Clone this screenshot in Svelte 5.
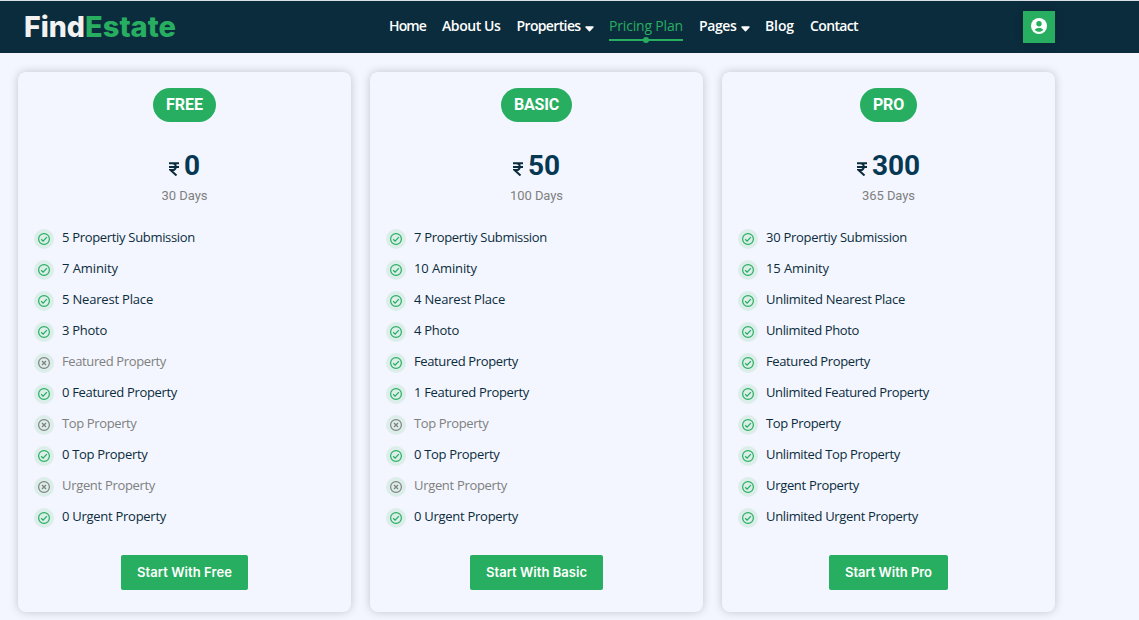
<script>
  const nav = [
    { label: 'Home', w: 37 },
    { label: 'About Us', w: 58.5 },
    { label: 'Properties', w: 76.5, tw: 64, menu: true },
    { label: 'Pricing Plan', w: 74, active: true },
    { label: 'Pages', w: 50, tw: 37.5, menu: true },
    { label: 'Blog', w: 29 },
    { label: 'Contact', w: 48 }
  ];

  const plans = [
    {
      name: 'Free', pill: 63, price: '0', days: 30, daysW: 46, button: 127,
      features: [
        ['5 Propertiy Submission', 133], ['7 Aminity', 56], ['5 Nearest Place', 91], ['3 Photo', 45],
        ['Featured Property', 104, true], ['0 Featured Property', 115], ['Top Property', 74.5, true],
        ['0 Top Property', 85.5], ['Urgent Property', 93, true], ['0 Urgent Property', 104]
      ]
    },
    {
      name: 'Basic', pill: 71, price: '50', days: 100, daysW: 53, button: 133,
      features: [
        ['7 Propertiy Submission', 133], ['10 Aminity', 63], ['4 Nearest Place', 91], ['4 Photo', 45],
        ['Featured Property', 104], ['1 Featured Property', 115], ['Top Property', 74.5, true],
        ['0 Top Property', 85.5], ['Urgent Property', 93, true], ['0 Urgent Property', 104]
      ]
    },
    {
      name: 'Pro', pill: 57, price: '300', days: 365, daysW: 53, button: 119,
      features: [
        ['30 Propertiy Submission', 141], ['15 Aminity', 63], ['Unlimited Nearest Place', 139], ['Unlimited Photo', 93],
        ['Featured Property', 104], ['Unlimited Featured Property', 163], ['Top Property', 74.5],
        ['Unlimited Top Property', 134], ['Urgent Property', 93], ['Unlimited Urgent Property', 152]
      ]
    }
  ];

  function track(node, width) {
    const natural = node.getBoundingClientRect().width;
    node.style.letterSpacing = `${(width - natural) / node.textContent.length}px`;
  }
</script>

<header>
  <svg class="logo" width="152" height="32" viewBox="0 0 152 32" role="img" aria-label="FindEstate">
    <text class="find" x="-1" y="24.6" textLength="61" lengthAdjust="spacingAndGlyphs">Find</text>
    <text class="estate" x="60" y="24.6" textLength="91" lengthAdjust="spacingAndGlyphs">Estate</text>
  </svg>
  <nav>
    {#each nav as item}
      <a href="#top" class:active={item.active} style:width="{item.w}px">
        <span use:track={item.tw ?? item.w}>{item.label}</span>
        {#if item.menu}
          <svg class="caret" width="9" height="6" viewBox="0 0 9 6"><path d="M1 1h7L4.5 4.8z" fill="#fff" stroke="#fff" stroke-width="1.4" stroke-linejoin="round" /></svg>
        {/if}
      </a>
    {/each}
  </nav>
  <button class="account" aria-label="Account">
    <svg width="16" height="16" viewBox="0 0 16 16">
      <circle cx="8" cy="8" r="8" fill="#fff" />
      <circle cx="8" cy="5.7" r="2.7" fill="#27ae60" />
      <path d="M3.8 11.8c.8-1.4 2.3-1.9 4.2-1.9s3.4.5 4.2 1.9C11 13.2 9.7 13.8 8 13.8s-3-.6-4.2-2z" fill="#27ae60" />
    </svg>
  </button>
</header>

<main>
  {#each plans as plan}
    <article>
      <h2 style:width="{plan.pill}px"><span use:track={plan.pill - 26}>{plan.name.toUpperCase()}</span></h2>
      <div class="price">
        <svg class="rupee" width="10" height="14" viewBox="0 0 10 14"><path d="M0 1.2h10M0 5h10M0 1.2h3c5 0 5 6.9 0 6.9H1.5L7.5 13.5" fill="none" stroke="#0b2c3d" stroke-width="2" /></svg>
        <strong>{plan.price}</strong>
      </div>
      <p><span use:track={plan.daysW}>{plan.days} Days</span></p>
      <ul>
        {#each plan.features as [label, width, off]}
          <li class:off>
            <i>
              <svg width="12" height="12" viewBox="0 0 12 12" fill="none" stroke="currentColor" stroke-width="1.2">
                <circle cx="6" cy="6" r="5.4" />
                {#if off}
                  <path d="M4 4l4 4M8 4L4 8" stroke-width="1.3" />
                {:else}
                  <path d="M3.2 6.2l1.9 1.9 3.8-4" stroke-width="1.3" />
                {/if}
              </svg>
            </i>
            <span use:track={width}>{label}</span>
          </li>
        {/each}
      </ul>
      <button class="start" style:width="{plan.button}px"><span use:track={plan.button - 32}>Start With {plan.name}</span></button>
    </article>
  {/each}
</main>

<style>
  :global(body) { background: #f3f6fe; }
  header {
    box-sizing: border-box; height: 53px; padding: 0 84px 0 25px;
    display: flex; align-items: flex-start;
    background: #0b2c3d; border-top: 1px solid #dcdfe1;
  }
  .logo { margin-top: 11px; overflow: visible; }
  .logo text { font: 800 28px Inter, sans-serif; fill: #f2f2f2; }
  .logo .estate { fill: #27ae60; }
  nav { display: flex; gap: 16px; margin: 13px 0 0 212px; }
  nav a {
    position: relative; display: flex; align-items: center; height: 26px;
    color: #fff; font: 600 14px/24px "Open Sans", sans-serif; text-decoration: none; white-space: nowrap;
  }
  nav a span { flex: none; margin-top: -2px; }
  .caret { flex: none; margin: 4px 0 0 4px; }
  nav a.active { color: #27ae60; font-weight: 500; }
  nav a.active::before { content: ""; position: absolute; left: 0; right: 0; bottom: -1px; height: 2px; background: #27ae60; }
  nav a.active::after { content: ""; position: absolute; left: 50%; bottom: -3px; width: 6px; height: 6px; margin-left: -3px; border-radius: 50%; background: #27ae60; }
  button { border: 0; padding: 0; background: #27ae60; color: #fff; }
  .account { width: 32px; height: 32px; margin: 10px 0 0 auto; display: grid; place-items: center; box-shadow: 0 0 10px #0002; }
  .account svg { margin-top: -2px; }
  main { box-sizing: border-box; height: 567px; display: flex; gap: 19px; padding: 19px 18px 8px; overflow: hidden; }
  article {
    box-sizing: border-box; width: 333px; height: 540px; padding: 16px 16px 0; flex: none;
    display: flex; flex-direction: column; align-items: center;
    border-radius: 8px; background: #f3f6fe; box-shadow: 0 0 10px rgba(0, 0, 0, .2);
  }
  h2 {
    height: 34px; margin: 0; border-radius: 17px; display: flex; justify-content: center;
    background: #27ae60; color: #fff; font: 700 16px/33px Roboto, sans-serif; white-space: nowrap;
  }
  h2 span { flex: none; }
  .price { display: flex; align-items: center; height: 32px; margin-top: 28px; color: #073853; }
  .rupee { margin: 5px 5px 0 0; }
  .price strong { font: 700 28px/32px Roboto, sans-serif; }
  p { margin: 5px 0 0; color: #808080; font: 400 13px/18px Roboto, sans-serif; }
  p span { display: inline-block; white-space: nowrap; }
  ul { align-self: stretch; list-style: none; margin: 17px 0 0; padding: 0; }
  li { height: 31px; display: flex; align-items: center; color: #0b2c3d; font: 400 13px/20px "Open Sans", sans-serif; white-space: nowrap; }
  li span { flex: none; margin-top: -2px; }
  i { width: 20px; height: 20px; margin: 2px 8px 0 0; border-radius: 50%; display: grid; place-items: center; background: #dceeea; color: #27ae60; }
  li.off, li.off i { color: #808080; }
  .start { height: 35px; margin-top: 23px; border-radius: 2px; font: 600 13px/35px Inter, sans-serif; display: flex; justify-content: center; white-space: nowrap; }
  .start span { flex: none; }
</style>
